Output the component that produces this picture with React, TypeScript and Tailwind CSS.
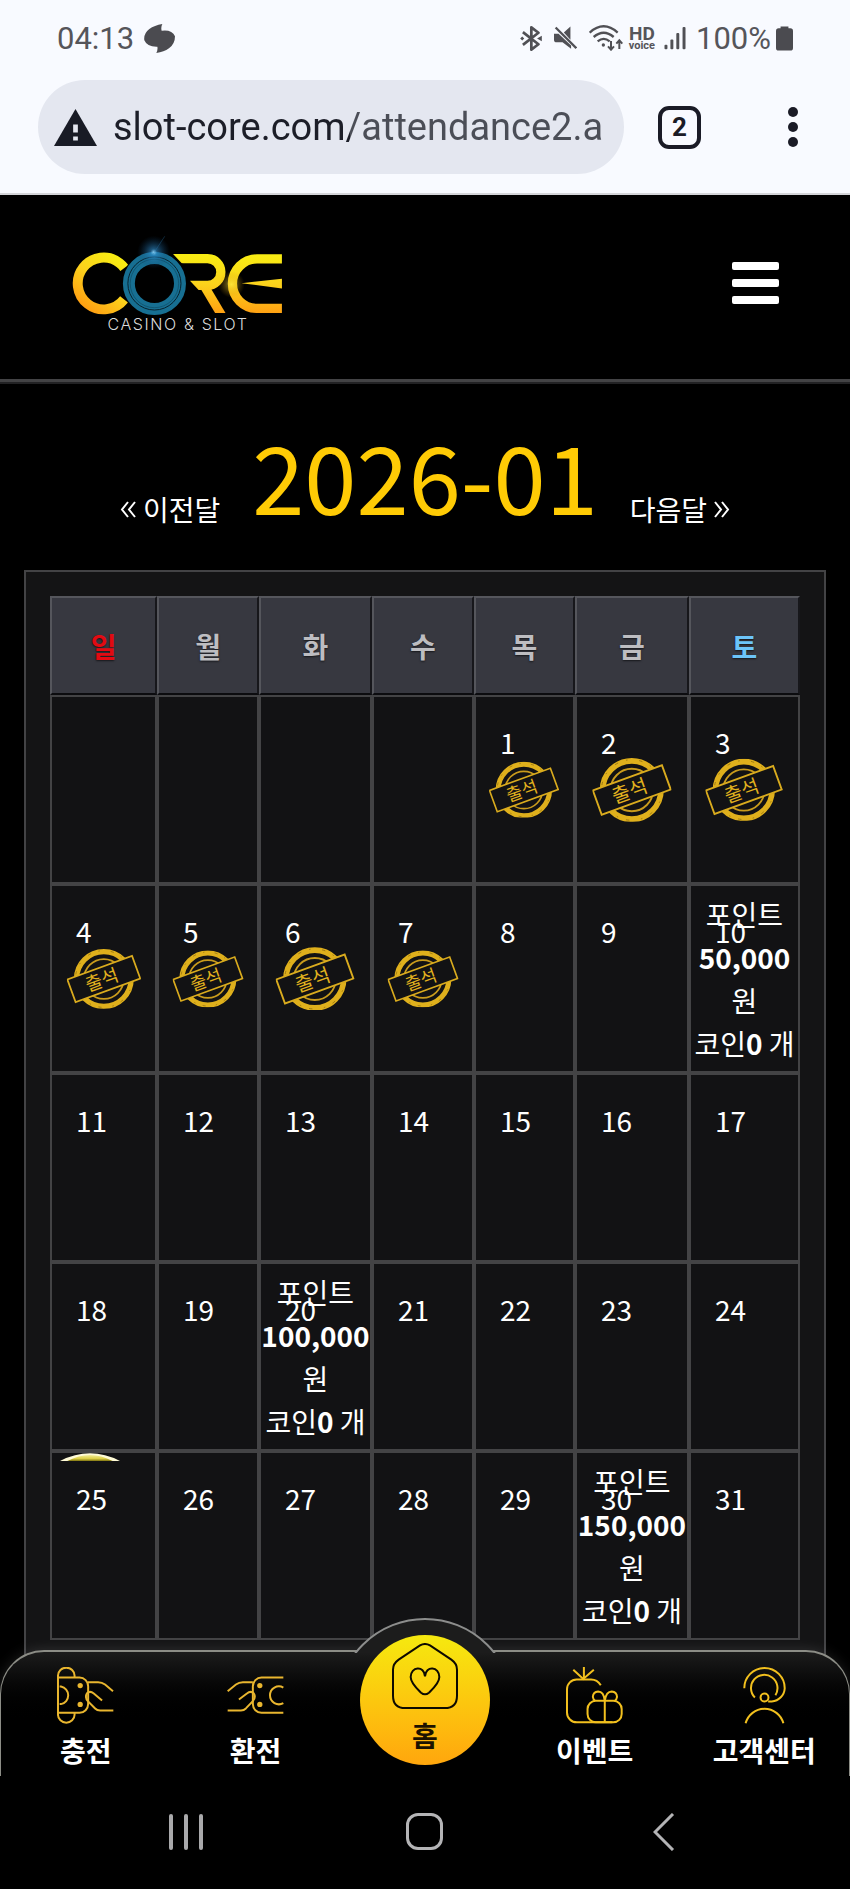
import clsx from "clsx";
import { ComponentType, useState } from "react";

interface Day {
  day?: number;
  stamped?: boolean;
  point?: string;
  coin?: number;
  moon?: boolean;
}

interface MenuItem {
  id: string;
  name: string;
  icon: ComponentType;
}

const weekdays = ["일", "월", "화", "수", "목", "금", "토"];

const FIRST_WEEKDAY = 4;
const DAYS_IN_MONTH = 31;
const LAST_ATTENDED = 7;

const rewards: Record<number, string> = {
  10: "50,000",
  20: "100,000",
  30: "150,000",
};

const buildWeeks = (): Day[][] => {
  const cells: Day[] = Array.from({ length: FIRST_WEEKDAY }, () => ({}));
  for (let day = 1; day <= DAYS_IN_MONTH; day++) {
    cells.push({
      day,
      stamped: day <= LAST_ATTENDED,
      point: rewards[day],
      coin: 0,
      moon: day === 25,
    });
  }
  const weeks: Day[][] = [];
  for (let i = 0; i < cells.length; i += 7) {
    weeks.push(cells.slice(i, i + 7));
  }
  return weeks;
};

const StatusBar = () => (
  <div className="flex h-[76px] items-center pl-[57px] pr-[57px] font-['Roboto'] text-[31px] leading-none text-[#55555a]">
    <span>04:13</span>
    <svg viewBox="0 0 93 87" className="ml-[10px] h-[29px] w-[31px]" fill="#4b4b50">
      <path d="M55 0 Q50 10 53 20 Q84 16 93 37 Q93 60 75 73 Q60 84 37 87 Q42 77 40 68 Q9 69 1 49 Q-2 29 16 15 Q31 4 55 0Z" />
    </svg>
    <div className="ml-auto flex items-center">
      {/* bluetooth */}
      <svg viewBox="0 0 64 74" className="h-[25px] w-[22px]" fill="none" stroke="#505055" strokeWidth="8">
        <path d="M8 18 L54 54 L33 70 V4 L54 20 L8 56" strokeLinejoin="round" />
        <path d="M0 37 l6 -6 l6 6 l-6 6Z M50 37 l14 -8 v16Z" fill="#505055" stroke="none" />
      </svg>
      {/* sound off */}
      <svg viewBox="0 0 70 70" className="ml-3 h-[24px] w-[23px]" fill="#505055">
        <path d="M50 0 V40 L30 18Z M0 22 H14 L52 58 V68 L26 48 H8 Q0 48 0 40Z" />
        <path d="M5 3 L68 66" stroke="#505055" strokeWidth="7" />
      </svg>
      {/* wifi */}
      <svg viewBox="0 0 102 78" className="ml-3 h-[26px] w-[34px]" fill="none" stroke="#505055" strokeWidth="7">
        <path d="M2 23 Q44 -15 86 23" />
        <path d="M14 36 Q44 10 74 36" />
        <path d="M26 49 Q44 34 62 49" />
        <circle cx="43" cy="60" r="5" fill="#505055" stroke="none" />
        <path d="M66 48 V74 M57 64 L66 74 L75 64 M91 72 V46 M82 56 L91 46 L100 56" strokeWidth="6" />
      </svg>
      <span className="ml-[6px] flex flex-col items-center font-bold">
        <span className="text-[19px] leading-[14px]">HD</span>
        <span className="text-[11px] leading-[9px]">voice</span>
      </span>
      {/* signal */}
      <svg viewBox="0 0 64 70" className="ml-[9px] h-[23px] w-[22px]" fill="#505055">
        <rect x="0" y="54" width="9" height="14" rx="3" />
        <rect x="18" y="38" width="9" height="30" rx="3" />
        <rect x="36" y="18" width="9" height="50" rx="3" />
        <rect x="55" y="0" width="9" height="68" rx="3" />
      </svg>
      <span className="ml-[10px]">100%</span>
      {/* battery */}
      <svg viewBox="0 0 52 74" className="ml-[5px] h-[25px] w-[17px]" fill="#4b4b50">
        <path d="M14 0 H38 V6 H44 Q52 6 52 14 V66 Q52 74 44 74 H8 Q0 74 0 66 V14 Q0 6 8 6 H14Z" />
      </svg>
    </div>
  </div>
);

const AddressBar = () => {
  const [url, setUrl] = useState("slot-core.com/attendance2.a");

  return (
    <div className="flex items-center pt-1 pb-[19px] pl-[38px] pr-[52px]">
      <label className="flex h-[94px] min-w-0 flex-1 items-center rounded-full bg-[#e4e7f0] pl-4 pr-5">
        <svg viewBox="0 0 128 110" className="h-[37px] w-[43px] shrink-0" role="img" aria-label="주의 요함">
          <path d="M64 0 L128 110 H0Z" fill="#181b25" />
          <path d="M57 46 H71 V70 H57Z M57 82 H71 V94 H57Z" fill="#e4e7f0" />
        </svg>
        <input
          type="text"
          aria-label="주소"
          value={url}
          onChange={(e) => setUrl(e.target.value)}
          className="ml-4 min-w-0 flex-1 bg-linear-to-r from-[#1c1e28] from-[237px] to-[#4b4e57] to-[237px] bg-clip-text font-['Roboto'] text-[38px] leading-[50px] text-transparent outline-none"
        />
      </label>
      <button
        type="button"
        aria-label="탭"
        className="ml-[34px] flex size-[43px] items-center justify-center rounded-[11px] border-4 border-[#1a1b26] font-['Roboto'] text-[26px] leading-none font-bold text-[#1a1b26]"
      >
        2
      </button>
      <button type="button" aria-label="메뉴" className="ml-[87px] flex flex-col gap-[5px]">
        <span className="size-[10px] rounded-full bg-[#1a1b26]" />
        <span className="size-[10px] rounded-full bg-[#1a1b26]" />
        <span className="size-[10px] rounded-full bg-[#1a1b26]" />
      </button>
    </div>
  );
};

const Logo = () => (
  <a href="#" aria-label="CORE" className="flex w-[216px] flex-col items-center">
    <svg viewBox="0 0 648 250" className="h-[83px] w-[216px]" fill="none">
      <defs>
        <linearGradient id="gold" gradientUnits="userSpaceOnUse" x1="0" y1="60" x2="0" y2="245">
          <stop offset="0" stopColor="#f8ee12" />
          <stop offset="0.5" stopColor="#fbd31c" />
          <stop offset="1" stopColor="#ff9f12" />
        </linearGradient>
        <radialGradient id="blueFlare">
          <stop offset="0" stopColor="#8fd4f5" />
          <stop offset="0.2" stopColor="#2f8fd0" stopOpacity="0.6" />
          <stop offset="1" stopColor="#0b3a66" stopOpacity="0" />
        </radialGradient>
        <radialGradient id="goldFlare">
          <stop offset="0" stopColor="#fff04a" />
          <stop offset="1" stopColor="#c98a00" stopOpacity="0" />
        </radialGradient>
        <clipPath id="bowl">
          <polygon points="306,60 480,60 480,178 392,178 360,144 390,110 336,92" />
        </clipPath>
        <clipPath id="band">
          <rect x="300" y="62" width="337" height="179" />
        </clipPath>
      </defs>
      <circle
        cx="100"
        cy="152"
        r="78"
        stroke="url(#gold)"
        strokeWidth="30"
        pathLength="360"
        strokeDasharray="284 76"
        transform="rotate(38 100 152)"
      />
      <circle cx="253" cy="152" r="98" fill="#000" />
      <circle cx="253" cy="152" r="77" stroke="#176f92" strokeWidth="36" />
      <circle cx="253" cy="152" r="80" stroke="#06222e" strokeWidth="3" />
      <circle cx="253" cy="152" r="73" stroke="#0d4a63" strokeWidth="2" />
      <ellipse cx="251" cy="58" rx="50" ry="50" fill="url(#blueFlare)" />
      <line x1="246" y1="68" x2="284" y2="10" stroke="#2a79b0" strokeWidth="2" strokeOpacity="0.5" />
      <rect x="260" y="77" width="193" height="81" rx="40" stroke="url(#gold)" strokeWidth="28" clipPath="url(#bowl)" />
      <g clipPath="url(#band)">
        <line x1="402" y1="158" x2="458" y2="252" stroke="url(#gold)" strokeWidth="27" />
        <rect x="488" y="78" width="300" height="149" rx="74" stroke="url(#gold)" strokeWidth="28" />
      </g>
      <polygon points="515,151 637,138 637,167" fill="url(#gold)" />
      <circle cx="485" cy="155" r="40" fill="url(#goldFlare)" fillOpacity="0.6" />
    </svg>
    <span className="font-['Inter'] text-base leading-4 font-light tracking-widest whitespace-nowrap text-[#dcdcdc]">
      CASINO &amp; SLOT
    </span>
  </a>
);

const SiteHeader = () => (
  <header className="flex items-start justify-between border-b-3 border-[#434345] pl-[70px] pr-[71px]">
    <div className="pt-[38px] pb-[47px]">
      <Logo />
    </div>
    <button type="button" aria-label="전체 메뉴" className="mt-[67px] flex w-[47px] flex-col gap-[9px]">
      <span className="h-2 w-full rounded-xs bg-white" />
      <span className="h-2 w-full rounded-xs bg-white" />
      <span className="h-2 w-full rounded-xs bg-white" />
    </button>
  </header>
);

const MonthNav = () => (
  <div className="flex items-end justify-center gap-8 pt-[18px] pb-6 text-[28px] leading-[42px] whitespace-nowrap text-white">
    <a href="#prev" className="flex items-center gap-[7px] pb-4">
      <svg viewBox="0 0 16 17" className="h-[17px] w-4" fill="none" stroke="currentColor" strokeWidth="2">
        <path d="M8 1 L2 8.5 L8 16 M15 1 L9 8.5 L15 16" />
      </svg>
      이전달
    </a>
    <h1 className="text-[94px] leading-[144px] text-[#ffcb05]">2026-01</h1>
    <a href="#next" className="flex items-center gap-[7px] pb-4">
      다음달
      <svg viewBox="0 0 16 17" className="h-[17px] w-4" fill="none" stroke="currentColor" strokeWidth="2">
        <path d="M1 1 L7 8.5 L1 16 M8 1 L14 8.5 L8 16" />
      </svg>
    </a>
  </div>
);

// "출석" stamp, scales with the column width
const Stamp = () => (
  <svg viewBox="0 0 209 170" className="absolute top-1/2 left-1/2 w-[72%] -translate-x-1/2 -translate-y-1/2" fill="none">
    <circle cx="104" cy="85" r="77" stroke="#dfb01c" strokeWidth="15" />
    <circle cx="104" cy="85" r="80" stroke="#8a6a12" strokeWidth="2" strokeDasharray="9 22 4 31" />
    <circle cx="104" cy="85" r="56" stroke="#c99b1c" strokeWidth="5" />
    <g transform="rotate(-20 104 85)">
      <rect x="7" y="51" width="194" height="68" fill="#121214" stroke="#d9ab1e" strokeWidth="5" />
      <text
        x="98"
        y="104"
        textAnchor="middle"
        fontSize="52"
        fill="#e2b21e"
        className="font-['Noto_Sans_CJK_KR']"
      >
        출석
      </text>
    </g>
  </svg>
);

const Crescent = () => (
  <svg viewBox="0 0 180 24" className="absolute top-0 left-2 h-2 w-[60px]">
    <defs>
      <linearGradient id="moon" x1="0" y1="0" x2="0" y2="1">
        <stop offset="0" stopColor="#f4ee9a" />
        <stop offset="0.6" stopColor="#ddd048" />
        <stop offset="1" stopColor="#7d7210" />
      </linearGradient>
    </defs>
    <path d="M0 24 Q90 -22 180 24Z" fill="#fffbd8" />
    <path d="M22 24 Q90 -12 158 24Z" fill="url(#moon)" />
  </svg>
);

const DayCell = ({ day, stamped, point, coin, moon }: Day) => (
  <td className="relative h-[189px] border-2 border-[#434345] bg-[#121214] p-0 align-top">
    {moon && <Crescent />}
    {day && <p className="pt-6 pl-6 leading-[43px]">{day}</p>}
    {stamped && <Stamp />}
    {point && (
      <div className="absolute inset-0 flex flex-col items-center justify-center leading-[43px] whitespace-nowrap">
        <span>포인트</span>
        <b>{point}</b>
        <span>원</span>
        <span>
          코인<b>{coin}</b> 개
        </span>
      </div>
    )}
  </td>
);

const Calendar = () => (
  <div className="mx-6 border-2 border-[#434345] bg-[#141415] p-6">
    <table className="w-full table-fixed border-separate border-spacing-0 text-[28px] text-white">
      <colgroup>
        <col className="w-[14.27%]" />
        <col className="w-[13.6%]" />
        <col className="w-[15.06%]" />
        <col className="w-[13.6%]" />
        <col className="w-[13.47%]" />
        <col className="w-[15.2%]" />
        <col className="w-[14.8%]" />
      </colgroup>
      <thead>
        <tr>
          {weekdays.map((name, i) => (
            <th
              key={name}
              scope="col"
              className={clsx(
                "h-[99px] border-2 border-t-[#55565c] border-r-[#17171b] border-b-[#0c0c0f] border-l-[#55565c] bg-[#373840] p-0 font-bold text-shadow-[0_1px_2px_rgba(0,0,0,0.6)]",
                i === 0 && "text-[#e20a12]",
                i === 6 && "text-[#6cc4f8]",
                i > 0 && i < 6 && "text-[#bdbdc1]"
              )}
            >
              {name}
            </th>
          ))}
        </tr>
      </thead>
      <tbody>
        {buildWeeks().map((week, i) => (
          <tr key={i}>
            {week.map((item, j) => (
              <DayCell key={j} {...item} />
            ))}
          </tr>
        ))}
      </tbody>
    </table>
  </div>
);

const ChargeIcon = () => (
  <svg viewBox="0 0 172 172" className="size-[57px]" fill="none" stroke="#e9b62f" strokeWidth="6">
    <path d="M3 146 V26 A24 23 0 0 1 53 26 V32 M3 144 A24 23 0 0 0 53 144 V138" />
    <path d="M3 32 H68 A26 26 0 0 1 94 58 V112 A26 26 0 0 1 68 138 H3" />
    <path d="M8 59 H12 A27 27 0 0 1 12 112 H8" />
    <circle cx="70" cy="56" r="8" fill="#e9b62f" stroke="none" />
    <circle cx="70" cy="113" r="8" fill="#e9b62f" stroke="none" />
    <path d="M93 46 H124 Q136 46 145 53 L169 73" />
    <path d="M136 101 L111 80 Q99 70 90 80 Q83 91 93 103 L115 125 Q121 131 130 131 H170" />
  </svg>
);

const ExchangeIcon = () => (
  <svg viewBox="0 0 172 172" className="size-[57px]" fill="none" stroke="#e9b62f" strokeWidth="6">
    <path d="M170 32 H104 A26 26 0 0 0 78 58 V112 A26 26 0 0 0 104 138 H170" />
    <path d="M170 62 A27 27 0 1 0 170 109" />
    <circle cx="99" cy="56" r="8" fill="#e9b62f" stroke="none" />
    <circle cx="99" cy="113" r="8" fill="#e9b62f" stroke="none" />
    <path d="M78 46 H48 Q36 46 27 53 L2 73" />
    <path d="M36 98 L60 80 Q72 70 81 80 Q88 91 78 103 L57 125 Q51 131 42 131 H2" />
  </svg>
);

const EventIcon = () => (
  <svg viewBox="0 0 172 172" className="size-[57px]" fill="none" stroke="#f2c01e" strokeWidth="6">
    <path d="M54 0 V36 M22 8 L52 36 L84 8" />
    <path d="M105 55 Q94 38 76 38 H32 A29 29 0 0 0 3 67 V137 A30 30 0 0 0 33 167 H140" />
    <rect x="65" y="102" width="103" height="65" rx="25" />
    <path d="M117 167 V102 Q114 74 97 74 Q82 75 81 90 Q82 98 88 102 M117 102 Q121 74 138 74 Q153 75 154 90 Q153 98 147 102" />
  </svg>
);

const SupportIcon = () => (
  <svg viewBox="0 0 172 172" className="size-[57px]" fill="none" stroke="#f2c01e" strokeWidth="6">
    <path d="M25 64 A61 61 0 0 1 147 64 A42 42 0 0 1 108 104 H97" />
    <path d="M57 92 A40 40 0 1 1 119 85" />
    <circle cx="86" cy="92" r="12" />
    <path d="M29 170 A59 59 0 0 1 143 170" />
  </svg>
);

const HomeIcon = () => (
  <svg viewBox="0 0 198 198" className="size-[66px]" fill="none" stroke="#0d0a00" strokeWidth="6">
    <path d="M84 7 Q99 -1 114 7 L178 50 Q195 62 195 80 V158 Q195 195 158 195 H40 Q3 195 3 158 V80 Q3 62 20 50Z" />
    <path d="M99 100 C97 66 56 70 56 102 C56 120 74 136 87 149 Q99 159 111 149 C124 136 142 120 142 102 C142 70 101 66 99 100Z" />
  </svg>
);

const leftMenu: MenuItem[] = [
  { id: "charge", name: "충전", icon: ChargeIcon },
  { id: "exchange", name: "환전", icon: ExchangeIcon },
];

const rightMenu: MenuItem[] = [
  { id: "event", name: "이벤트", icon: EventIcon },
  { id: "support", name: "고객센터", icon: SupportIcon },
];

const MenuLink = ({ id, name, icon: Icon }: MenuItem) => (
  <a href={`#${id}`} className="flex flex-col items-center pt-[15px]">
    <Icon />
    <span className="mt-[6px] leading-10 whitespace-nowrap">{name}</span>
  </a>
);

const BottomMenu = () => (
  <nav className="relative -mt-4 grid h-[126px] grid-cols-5 rounded-t-[44px] border border-t-2 border-b-0 border-[#8c8d86] bg-linear-to-b from-[#1c1c1c] to-black to-60% text-[28px] font-bold text-white shadow-[0_0_14px_rgba(255,255,255,0.12)]">
    {/* raised edge behind the home button */}
    <div className="absolute -top-[34px] left-1/2 h-[35px] w-[178px] -translate-x-1/2 overflow-hidden">
      <div className="size-[178px] rounded-full border-2 border-[#8c8d8c] bg-[#1c1c1c]" />
    </div>
    {leftMenu.map((item) => (
      <MenuLink key={item.id} {...item} />
    ))}
    <a
      href="#home"
      className="relative -mt-[17px] flex size-[130px] flex-col items-center justify-self-center rounded-full bg-linear-to-b from-[#f5e90f] to-[#ffa60d] pt-2 text-[#1c1200]"
    >
      <HomeIcon />
      <span className="mt-[6px] leading-10">홈</span>
    </a>
    {rightMenu.map((item) => (
      <MenuLink key={item.id} {...item} />
    ))}
  </nav>
);

const SystemBar = () => (
  <div className="relative grid h-[113px] grid-cols-3 items-center justify-items-center bg-black px-[66px] pb-[2px]">
    <button type="button" aria-label="최근 앱" className="flex gap-[11px]">
      <span className="h-9 w-1 rounded-full bg-[#a9a9ab]" />
      <span className="h-9 w-1 rounded-full bg-[#a9a9ab]" />
      <span className="h-9 w-1 rounded-full bg-[#a9a9ab]" />
    </button>
    <button type="button" aria-label="홈 화면" className="size-[37px] rounded-[12px] border-[3px] border-[#b4b4b6]" />
    <button type="button" aria-label="뒤로">
      <svg viewBox="0 0 22 38" className="h-[38px] w-[22px]" fill="none" stroke="#b4b4b6" strokeWidth="3">
        <path d="M20 1 L2 19 L20 37" />
      </svg>
    </button>
  </div>
);

export default function App() {
  return (
    <div className="min-h-screen bg-black font-['Noto_Sans_CJK_KR',sans-serif]">
      <div className="border-b-2 border-[#d4d5d9] bg-[#f8faff]">
        <StatusBar />
        <AddressBar />
      </div>
      <SiteHeader />
      <main className="border-t-2 border-[#222224]">
        <MonthNav />
        <Calendar />
      </main>
      <BottomMenu />
      <SystemBar />
    </div>
  );
}
